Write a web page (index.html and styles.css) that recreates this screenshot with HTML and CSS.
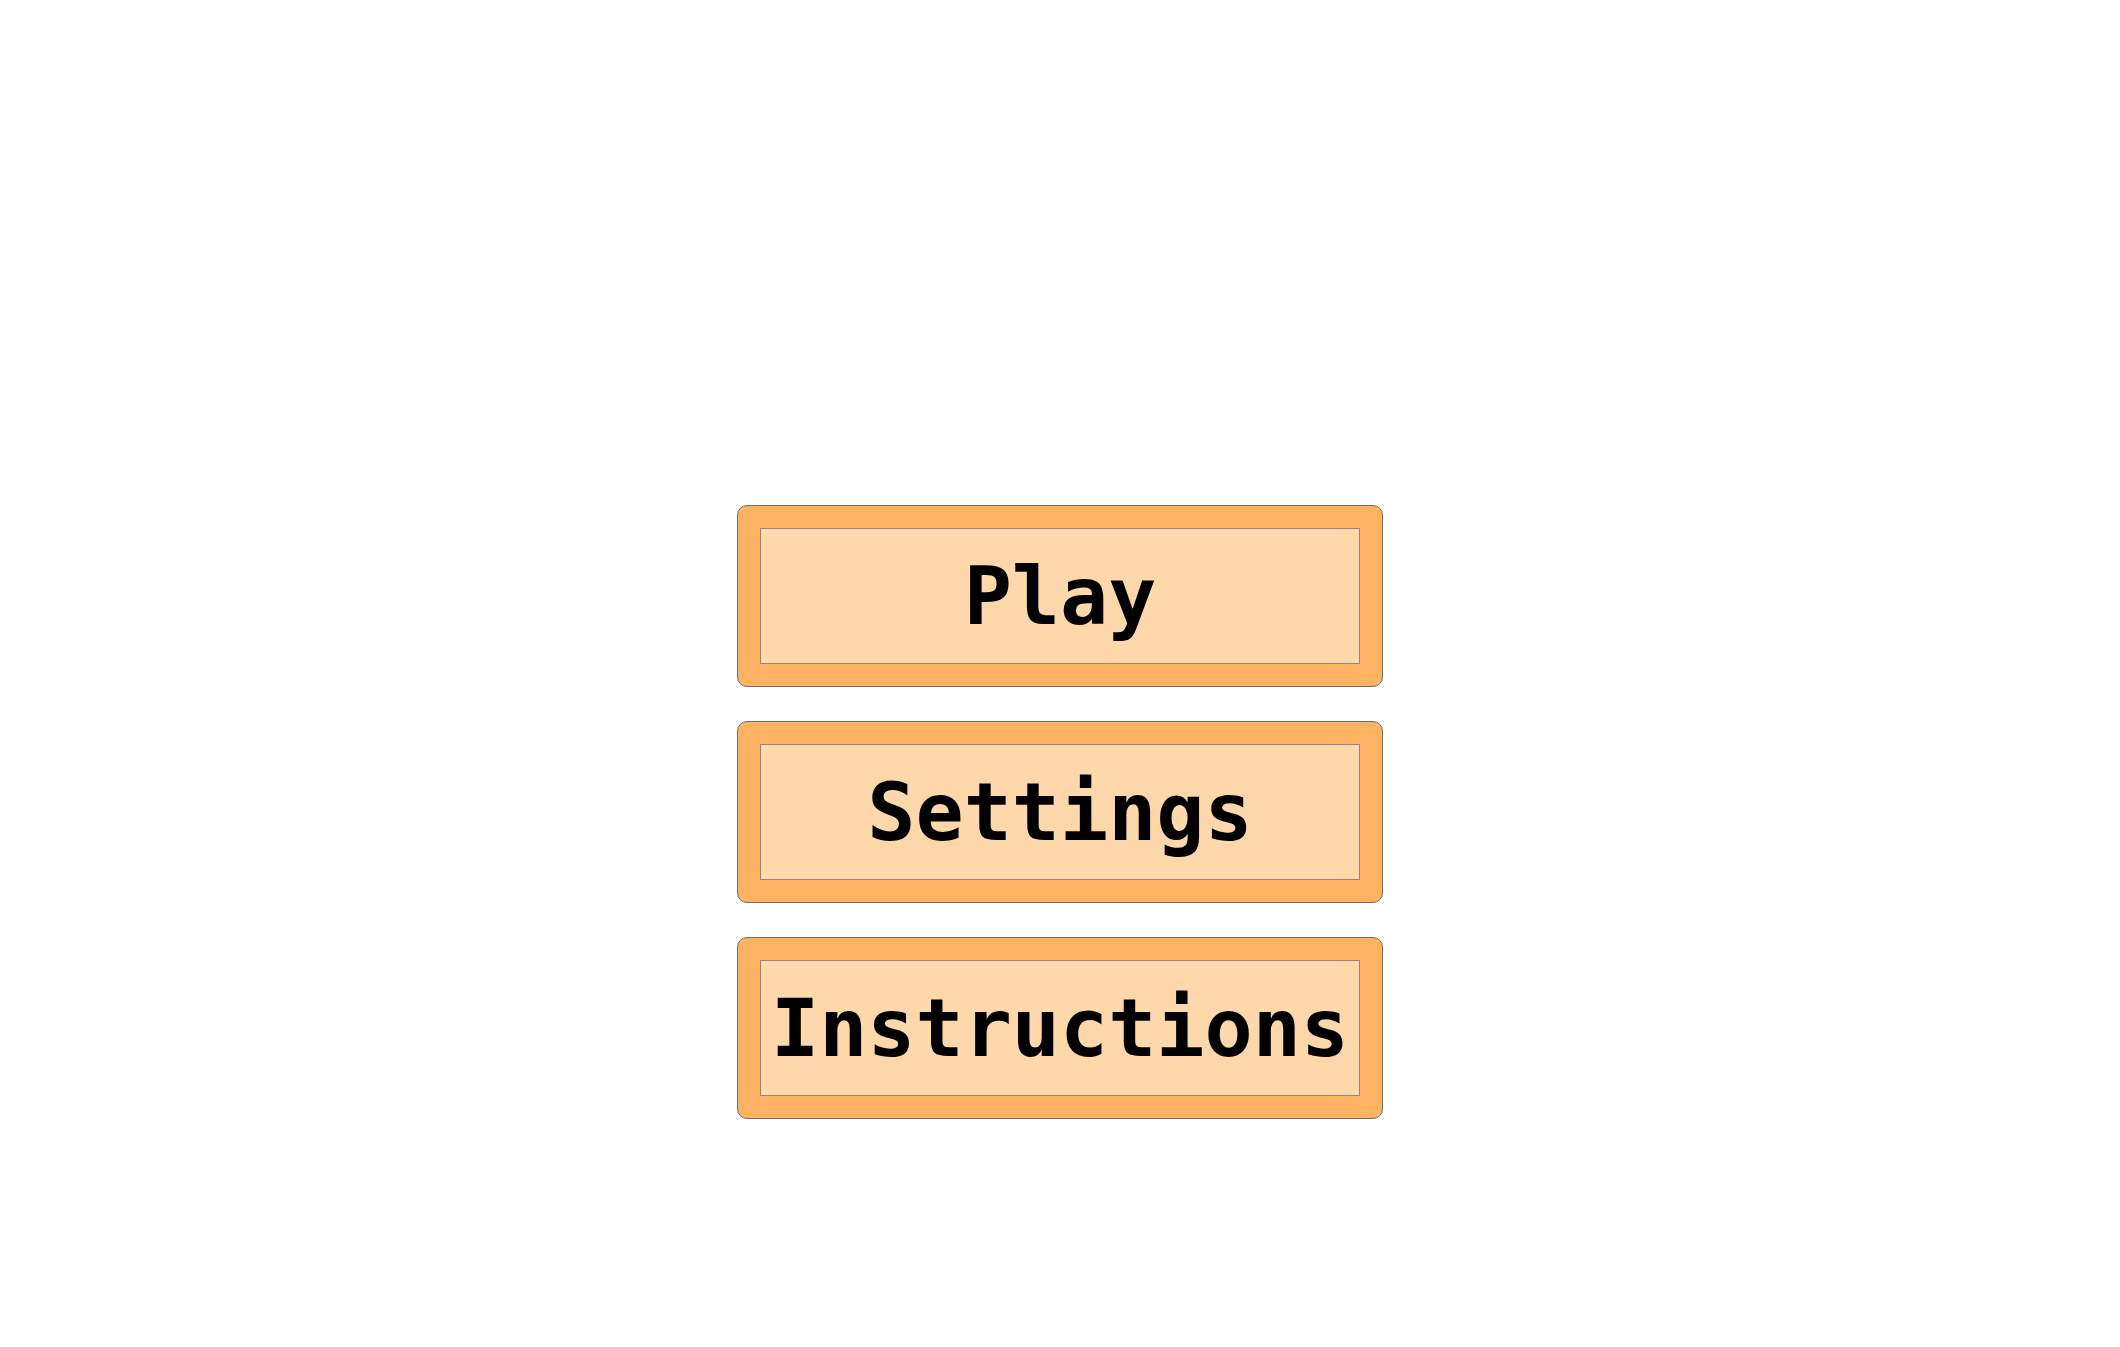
FILE: index.html
```html
<!DOCTYPE html>
<html lang="en">
<head>
    <meta charset="UTF-8">
    <meta name="viewport" content="width=device-width, initial-scale=1.0">
    <title>Menu</title>
    <link rel="stylesheet" href="styles.css">
</head>
<body>
    <div class="menu">
        <button class="menu-btn"><span class="label">Play</span></button>
        <button class="menu-btn"><span class="label">Settings</span></button>
        <button class="menu-btn"><span class="label">Instructions</span></button>
    </div>
</body>
</html>
```
FILE: styles.css
```css
body {
    margin: 0;
    padding: 0;
    background-color: #fff;
    font-family: "DejaVu Sans Mono", monospace;
}

.menu {
    display: flex;
    flex-direction: column;
    align-items: center;
    gap: 34px;
    padding-top: 505px;
}

.menu-btn {
    display: block;
    width: 646px;
    height: 182px;
    box-sizing: border-box;
    padding: 22px;
    margin: 0;
    background-color: #ffb261;
    border: 1px solid #6f6f6f;
    border-radius: 10px;
    cursor: pointer;
    font: inherit;
}

.menu-btn .label {
    display: flex;
    justify-content: center;
    align-items: center;
    height: 100%;
    box-sizing: border-box;
    background-color: #fed7ab;
    border: 1px solid #8a8a8a;
    font-size: 80px;
    font-weight: bold;
    color: #000;
    white-space: nowrap;
}
```
